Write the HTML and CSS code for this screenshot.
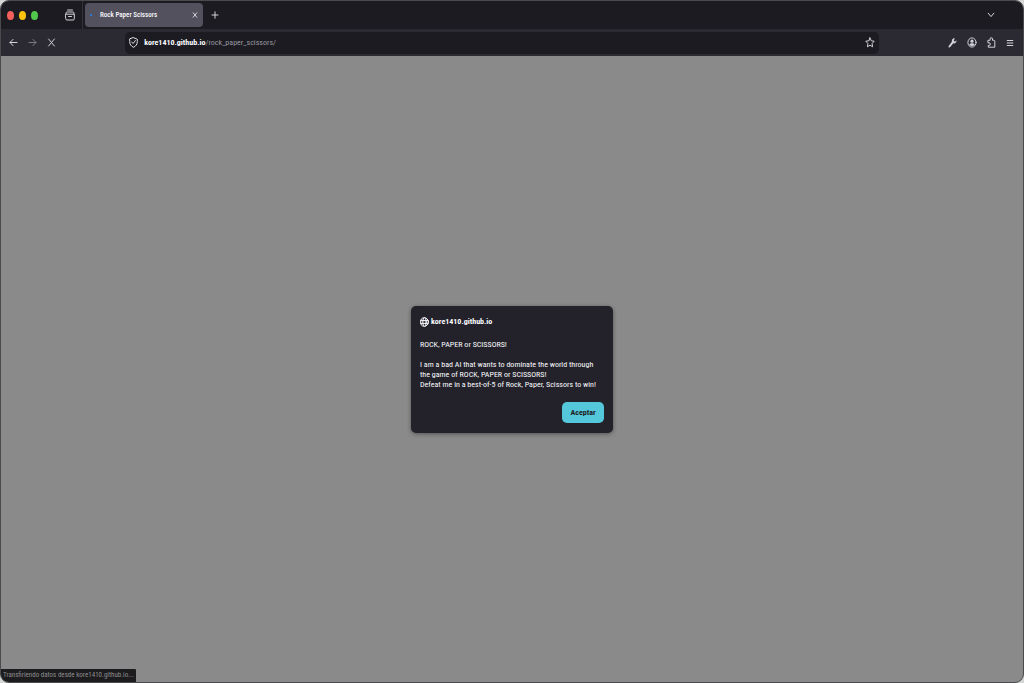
FILE: index.html
```html
<!DOCTYPE html>
<html lang="es">
<head>
<meta charset="utf-8">
<title>Rock Paper Scissors</title>
<link rel="stylesheet" href="styles.css">
</head>
<body>
<div class="window">
  <header class="tabbar">
    <div class="lights">
      <button class="light close" aria-label="Cerrar ventana"></button>
      <button class="light minimize" aria-label="Minimizar"></button>
      <button class="light expand" aria-label="Maximizar"></button>
    </div>
    <button class="icon-button overview" aria-label="Vista de pestañas">
      <svg width="10" height="12" viewBox="0 0 10 12"><path d="M2.500 1h5M1 5V4.200Q1 3 2.200 3h5.600Q9 3 9 4.200V5"/><path d="M.7 5.200h8.600v4.600q0 1.200-1.200 1.200H1.900Q.7 11 .7 9.800z"/><path d="M3.500 7.500h3"/></svg>
    </button>
    <div class="tab">
      <span class="loading"></span>
      <span class="tab-title">Rock Paper Scissors</span>
      <button class="icon-button tab-close" aria-label="Cerrar pestaña">
        <svg width="6" height="6" viewBox="0 0 6 6"><path d="M1.200.8l3.600 4.400M4.800.8L1.200 5.200"/></svg>
      </button>
    </div>
    <button class="icon-button new-tab" aria-label="Nueva pestaña">
      <svg width="8" height="8" viewBox="0 0 8 8"><path d="M4 .8v6.400M1 4h6"/></svg>
    </button>
    <button class="icon-button all-tabs" aria-label="Listar pestañas">
      <svg width="8" height="6" viewBox="0 0 8 6"><path d="M1.200 1.200L4 4.600l2.800-3.400"/></svg>
    </button>
  </header>
  <nav class="toolbar">
    <div class="navigation">
      <button class="icon-button" aria-label="Atrás">
        <svg width="9" height="9" viewBox="0 0 9 9"><path d="M8 4.500H1M4 1.400L1 4.500l3 3.100"/></svg>
      </button>
      <button class="icon-button faded" aria-label="Adelante" disabled>
        <svg width="9" height="9" viewBox="0 0 9 9"><path d="M1 4.500h7M5 1.400l3 3.100-3 3.100"/></svg>
      </button>
      <button class="icon-button" aria-label="Detener">
        <svg width="9" height="9" viewBox="0 0 9 9"><path d="M1.600 1l5.800 7M7.400 1L1.600 8"/></svg>
      </button>
    </div>
    <div class="address">
      <svg class="shield" width="9" height="11" viewBox="0 0 9 11"><path d="M4.500.7l3.800 1.500v2.500c0 2.500-1.400 4.500-3.800 5.600C2.100 9.200.7 7.200.7 4.700V2.200z"/><path d="M2.700 5l1.400 1.500 2.300-3"/></svg>
      <a class="url" href="#"><strong>kore1410.github.io</strong>/rock_paper_scissors/</a>
      <button class="icon-button" aria-label="Añadir a marcadores">
        <svg width="10" height="11" viewBox="0 0 10 11"><path d="M5 .9l1.300 2.900 2.900.4-2.100 2.300.5 3.300L5 8.200 2.400 9.800l.5-3.300L.8 4.200l2.900-.4z"/></svg>
      </button>
    </div>
    <div class="actions">
      <button class="icon-button" aria-label="Herramientas">
        <svg width="9" height="10" viewBox="0 0 9 10"><path class="solid" d="M6.900.5a2.300 2.700 0 0 0-3 3.300L.7 7.900c-.7 1 .5 2.100 1.300 1.300l3.300-4a2.300 2.600 0 0 0 3.100-3L7 3.700 5.700 2.600z"/></svg>
      </button>
      <button class="icon-button" aria-label="Cuenta">
        <svg width="10" height="11" viewBox="0 0 10 11"><ellipse cx="5" cy="5.500" rx="4.100" ry="4.600"/><circle class="solid" cx="5" cy="4.200" r="1.600"/><path class="solid" d="M2.300 7.900c0-2.300 5.400-2.300 5.400 0-1.300 1.300-4.100 1.300-5.400 0z"/></svg>
      </button>
      <button class="icon-button" aria-label="Extensiones">
        <svg width="9" height="11" viewBox="0 0 9 11"><path d="M1.300 3.300h1.800V2a1.200 1.300 0 0 1 2.400 0v1.300h1.300q1 0 1 1v5.900H1.300V8.400h.9a1.100 1.300 0 0 0 0-2.600h-.9z"/></svg>
      </button>
      <button class="icon-button" aria-label="Menú">
        <svg width="8" height="8" viewBox="0 0 8 8"><path d="M1.200 1.500h5.600M1.200 4h5.600M1.200 6.500h5.600"/></svg>
      </button>
    </div>
  </nav>
  <main class="page">
    <section class="dialog" role="alertdialog" aria-labelledby="origin" aria-describedby="message">
      <h1 class="origin" id="origin">
        <svg width="9" height="10" viewBox="0 0 9 10"><ellipse cx="4.500" cy="5" rx="3.900" ry="4.300"/><ellipse cx="4.500" cy="5" rx="1.700" ry="4.300"/><path d="M.8 3.600h7.400M.8 6.400h7.400"/></svg>
        kore1410.github.io
      </h1>
      <p class="message" id="message">ROCK, PAPER or SCISSORS!

I am a bad AI that wants to dominate the world through
the game of ROCK, PAPER or SCISSORS!
Defeat me in a best-of-5 of Rock, Paper, Scissors to win!</p>
      <button class="accept">Aceptar</button>
    </section>
    <div class="status">Transfiriendo datos desde kore1410.github.io...</div>
  </main>
</div>
</body>
</html>
```
FILE: styles.css
```css
* {
  box-sizing: border-box;
}

body {
  margin: 0;
  background: #d4d6d5;
  font-family: "Roboto Condensed", Roboto, "Liberation Sans", sans-serif;
  font-size: 8px;
  color: #fbfbfe;
}

button {
  padding: 0;
  border: 0;
  background: none;
  color: inherit;
  font: inherit;
}

svg {
  display: block;
  flex: none;
  fill: none;
  stroke: currentColor;
  stroke-width: 1;
  stroke-linecap: round;
  stroke-linejoin: round;
}

.solid {
  fill: currentColor;
  stroke: none;
}

.window {
  display: flex;
  flex-direction: column;
  height: 100vh;
  border: 1px solid #4b4b4d;
  border-radius: 9px;
  overflow: hidden;
  background: #8a8a8a;
}

.tabbar {
  display: flex;
  align-items: center;
  height: 28px;
  background: #1c1b22;
}

.lights {
  display: flex;
  gap: 5px;
  padding-left: 6px;
}

.light {
  width: 7px;
  height: 9px;
  border-radius: 50%;
}

.close {
  background: #f4605c;
}

.minimize {
  background: #fcc40c;
}

.expand {
  background: #50c94c;
}

.icon-button {
  display: flex;
  align-items: center;
  justify-content: center;
  color: #d2d2d8;
}

.overview {
  width: 45px;
  height: 100%;
  padding-left: 20px;
  border-right: 1px solid #323139;
}

.tab {
  display: flex;
  align-items: center;
  width: 118px;
  height: 24px;
  margin-left: 2px;
  padding: 0 5px;
  border-radius: 4px;
  background: #52515d;
  font-size: 7px;
  font-weight: 500;
}

.loading {
  width: 2px;
  height: 2px;
  border-radius: 50%;
  background: #2484f4;
}

.tab-title {
  flex: 1;
  padding-left: 8px;
}

.new-tab {
  width: 24px;
  height: 24px;
}

.all-tabs {
  width: 24px;
  height: 24px;
  margin-left: auto;
  margin-right: 20px;
}

.toolbar {
  display: flex;
  align-items: center;
  justify-content: space-between;
  height: 27px;
  padding: 0 9px 0 8px;
  background: #2b2a33;
}

.navigation,
.actions {
  display: flex;
  align-items: center;
  gap: 10px;
}

.faded {
  color: #7c7b84;
}

.address {
  display: flex;
  align-items: center;
  width: 75%;
  height: 22px;
  padding: 0 4px;
  border-radius: 5px;
  background: #1c1b22;
}

.shield {
  color: #dddde3;
}

.url {
  flex: 1;
  padding-left: 6px;
  color: #98979f;
  font-size: 8px;
  text-decoration: none;
}

.url strong {
  color: #fbfbfe;
  font-weight: 700;
}

.page {
  position: relative;
  display: flex;
  flex: 1;
  align-items: center;
  justify-content: center;
}

.dialog {
  display: flex;
  flex-direction: column;
  width: 202px;
  padding: 10px 9px;
  border-radius: 5px;
  background: #23222b;
  box-shadow: 0 1px 4px #0006;
}

.origin {
  display: flex;
  align-items: center;
  gap: 2px;
  margin: 0;
  font-size: 8px;
  line-height: 12px;
  font-weight: 700;
}

.message {
  margin: 12px 0;
  font-size: 8px;
  line-height: 10px;
  white-space: pre;
}

.accept {
  align-self: flex-end;
  width: 42px;
  height: 21px;
  border-radius: 5px;
  background: #54c8da;
  color: #1c1b22;
  font-weight: 700;
}

.status {
  position: absolute;
  left: 0;
  bottom: 0;
  padding: 2px;
  border-top-right-radius: 1px;
  background: #1c1b1d;
  color: #8d8d90;
  font-size: 7px;
  line-height: 9px;
}
```
